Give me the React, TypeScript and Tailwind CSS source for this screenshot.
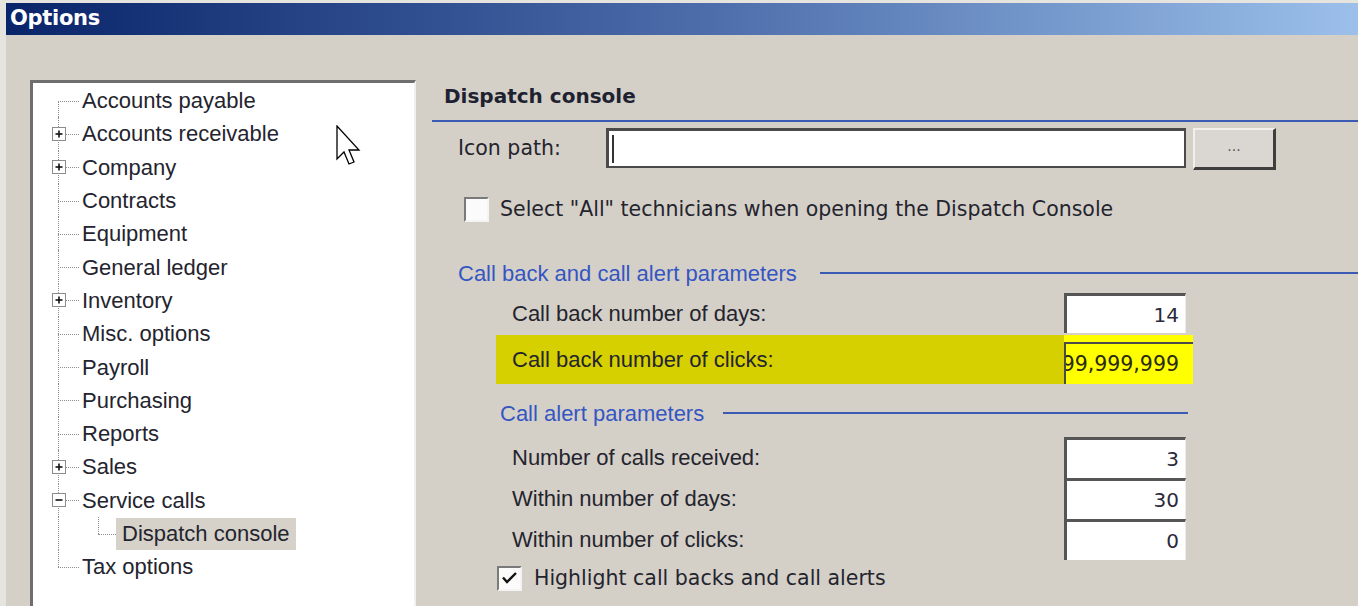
import React from "react"

const treeItems = [
  { label: "Accounts payable" },
  { label: "Accounts receivable", box: "plus" },
  { label: "Company", box: "plus" },
  { label: "Contracts" },
  { label: "Equipment" },
  { label: "General ledger" },
  { label: "Inventory", box: "plus" },
  { label: "Misc. options" },
  { label: "Payroll" },
  { label: "Purchasing" },
  { label: "Reports" },
  { label: "Sales", box: "plus" },
  { label: "Service calls", box: "minus" },
  { label: "Dispatch console", child: true },
  { label: "Tax options" },
]

function ExpandBox({ kind }: { kind: string }) {
  return (
    <svg className="absolute left-[19px] top-1/2 -translate-y-1/2" width="14" height="14" viewBox="0 0 14 14">
      <rect x="0.5" y="0.5" width="13" height="13" fill="#fff" stroke="#8c8c8c" />
      <path d="M3.5 7h7" stroke="#111" strokeWidth="1.6" />
      {kind === "plus" && <path d="M7 3.5v7" stroke="#111" strokeWidth="1.6" />}
    </svg>
  )
}

function TreeRow({ item, index, count }: { item: (typeof treeItems)[number]; index: number; count: number }) {
  const first = index === 0
  const last = index === count - 1
  return (
    <div className="relative flex h-[33.3px] items-center">
      <span
        className={
          first
            ? "absolute left-[25px] top-1/2 bottom-0 border-l border-dotted border-[#8f8f8f]"
            : last
              ? "absolute left-[25px] top-0 bottom-1/2 border-l border-dotted border-[#8f8f8f]"
              : "absolute left-[25px] top-0 bottom-0 border-l border-dotted border-[#8f8f8f]"
        }
      />
      {item.child ? (
        <>
          <span className="absolute left-[65px] top-0 bottom-1/2 border-l border-dotted border-[#8f8f8f]" />
          <span className="absolute left-[65px] top-1/2 w-[18px] border-t border-dotted border-[#8f8f8f]" />
          <span className="ml-[83px] flex h-[32px] items-center bg-[#d6d2ca] px-[6px]">{item.label}</span>
        </>
      ) : (
        <>
          <span className="absolute left-[25px] top-1/2 w-[21px] border-t border-dotted border-[#8f8f8f]" />
          {item.box && <ExpandBox kind={item.box} />}
          <span className="pl-[49px]">{item.label}</span>
        </>
      )}
    </div>
  )
}

function Checkbox({ checked }: { checked?: boolean }) {
  return (
    <span className="flex h-[25px] w-[25px] shrink-0 items-center justify-center border-t-2 border-l-2 border-[#7a7a7a] border-r-2 border-b-2 border-r-[#f4f4f4] border-b-[#f4f4f4] bg-[#fbfbfb]">
      {checked && (
        <svg width="17" height="15" viewBox="0 0 17 15">
          <path d="M2 6.5l4 4.5L15 2" fill="none" stroke="#111" strokeWidth="2.4" />
        </svg>
      )}
    </span>
  )
}

function NumberRow({ label, value, h }: { label: string; value: string; h: string }) {
  return (
    <div className={`flex ${h}`}>
      <div className="flex w-[632px] items-center pl-[80px]">{label}</div>
      <div className="flex w-[122px] items-center justify-end border-t-[3px] border-l-[3px] border-[#555] border-r border-r-[#ececec] bg-white pr-[6px] font-['DejaVu_Sans',sans-serif] text-[20px] text-[#2a2a3a]">
        {value}
      </div>
    </div>
  )
}

export default function App() {
  return (
    <div className="relative h-[606px] w-[1358px] overflow-hidden border-l-[6px] border-t-[3px] border-[#e6e4de] bg-[#d4d0c8] font-['Liberation_Sans',Arial,sans-serif] text-[22px] text-[#24242e]">
      {/* title bar */}
      <div className="flex h-[32px] items-center bg-linear-to-r from-[#0a246a] via-[#4a6aa8] to-[#9cc0ea] pl-[4px]">
        <span className="font-['DejaVu_Sans',sans-serif] text-[21px] font-bold tracking-[-0.3px] text-white">Options</span>
      </div>

      <div className="flex">
        {/* tree */}
        <div className="w-[410px] shrink-0 pl-[24px] pt-[45px]">
          <div className="h-[540px] border-t-[3px] border-l-[3px] border-[#6e6e6e] border-r-2 border-r-[#f0f0f0] bg-white pt-[1px]">
            {treeItems.map((item, i) => (
              <TreeRow key={item.label} item={item} index={i} count={treeItems.length} />
            ))}
          </div>
        </div>

        {/* settings */}
        <div className="flex-1 pl-[16px]">
          <div className="pl-[12px] pt-[49px] font-['DejaVu_Sans',sans-serif] text-[20px] font-bold leading-[24px] text-[#1e2230]">
            Dispatch console
          </div>
          <div className="mt-[12px] h-[2px] bg-[#3a5ab4]" />

          <div className="mt-[6px] flex items-start font-['DejaVu_Sans',sans-serif] text-[20.5px]">
            <div className="flex h-[40px] w-[174px] items-center pl-[26px]">Icon path:</div>
            <div className="flex h-[40px] w-[580px] items-center border-t-[3px] border-l-[3px] border-r-2 border-b-2 border-[#4a4a4a] bg-white">
              <span className="ml-[3px] h-[28px] w-[2px] bg-[#333]" />
            </div>
            <div className="ml-[7px] flex h-[42px] w-[83px] items-center justify-center border-t-2 border-l-2 border-[#f2f0ec] border-r-[3px] border-b-[3px] border-r-[#3e3e3e] border-b-[#3e3e3e] bg-[#dad6d2] pb-[4px] text-[14px] text-[#555]">
              ...
            </div>
          </div>

          <div className="mt-[26px] flex h-[26px] items-center pl-[32px] font-['DejaVu_Sans',sans-serif] text-[20.5px]">
            <Checkbox />
            <span className="ml-[11px]">Select "All" technicians when opening the Dispatch Console</span>
          </div>

          <div className="mt-[39px] flex h-[24px] items-center pl-[26px] text-[#3556c2]">
            <span>Call back and call alert parameters</span>
            <span className="ml-[23px] h-[2px] flex-1 bg-[#3a5ab4]" />
          </div>

          <div className="mt-[8px]">
            <NumberRow label="Call back number of days:" value="14" h="h-[40px]" />
          </div>

          <div className="mt-[2px] ml-[64px] flex h-[49px] w-[697px] bg-[#d6d000]">
            <div className="flex w-[568px] items-center pl-[16px]">Call back number of clicks:</div>
            <div className="h-full w-[129px] bg-[#ffff00] pt-[7px]">
              <div className="flex h-full items-center justify-end overflow-hidden border-t-2 border-l-2 border-[#4a4a4a] pr-[14px] font-['DejaVu_Sans',sans-serif] text-[20.5px] text-[#2a2a10]">
                <span className="whitespace-nowrap">99,999,999</span>
              </div>
            </div>
          </div>

          <div className="mt-[17px] flex h-[24px] items-center pl-[68px] text-[#3556c2]">
            <span>Call alert parameters</span>
            <span className="ml-[19px] h-[2px] w-[465px] bg-[#3a5ab4]" />
          </div>

          <div className="mt-[12px]">
            <NumberRow label="Number of calls received:" value="3" h="h-[41px]" />
            <NumberRow label="Within number of days:" value="30" h="h-[41px]" />
            <NumberRow label="Within number of clicks:" value="0" h="h-[41px]" />
          </div>

          <div className="mt-[6px] flex h-[24px] items-center pl-[65px] font-['DejaVu_Sans',sans-serif] text-[20.5px]">
            <Checkbox checked />
            <span className="ml-[12px]">Highlight call backs and call alerts</span>
          </div>
        </div>
      </div>

      {/* mouse pointer */}
      <svg className="absolute left-[330px] top-[122px]" width="28" height="42" viewBox="0 0 28 42">
        <path d="M1 1v33l7-7 5 12 5-2-5-12h10z" fill="#fff" stroke="#000" strokeWidth="1.3" strokeLinejoin="miter" />
      </svg>
    </div>
  )
}
